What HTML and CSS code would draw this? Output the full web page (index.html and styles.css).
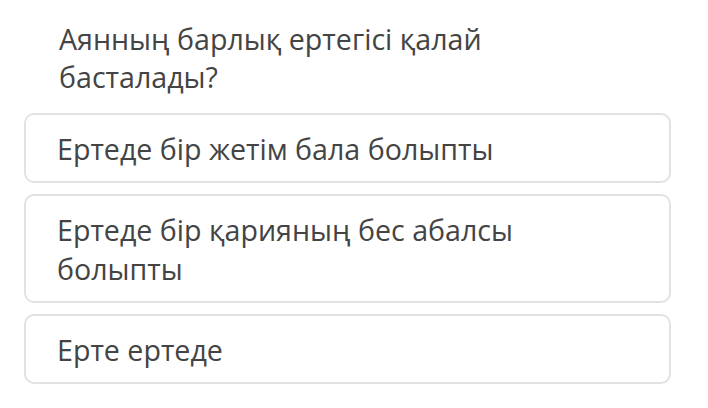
FILE: index.html
```html
<!DOCTYPE html>
<html lang="kk">
<head>
    <meta charset="UTF-8">
    <meta name="viewport" content="width=device-width, initial-scale=1.0">
    <title>Сұрақ</title>
    <link rel="stylesheet" href="styles.css">
</head>
<body>
    <div class="quiz">
        <p class="question">Аянның барлық ертегісі қалай басталады?</p>
        <ul class="answers">
            <li class="answer">Ертеде бір жетім бала болыпты</li>
            <li class="answer">Ертеде бір қарияның бес абалсы болыпты</li>
            <li class="answer">Ерте ертеде</li>
        </ul>
    </div>
</body>
</html>
```

FILE: styles.css
```css
:root {
    --text-dark: #444;
    --border-light: #e2e2e2;
    --white: #ffffff;
}

* {
    box-sizing: border-box;
    margin: 0;
    padding: 0;
}

body {
    font-family: 'Open Sans', 'Noto Sans', sans-serif;
    background: var(--white);
    color: var(--text-dark);
}

.quiz {
    width: 647px;
    margin-left: 24px;
    padding-top: 20px;
}

.question {
    font-size: 28.6px;
    line-height: 38px;
    padding-left: 35px;
    max-width: 540px;
    margin-bottom: 17px;
}

.answers {
    list-style: none;
    display: flex;
    flex-direction: column;
    gap: 11px;
}

.answer {
    font-size: 28.6px;
    line-height: 39px;
    border: 2px solid var(--border-light);
    border-radius: 10px;
    padding: 14px 30px 13px 31px;
}
```
